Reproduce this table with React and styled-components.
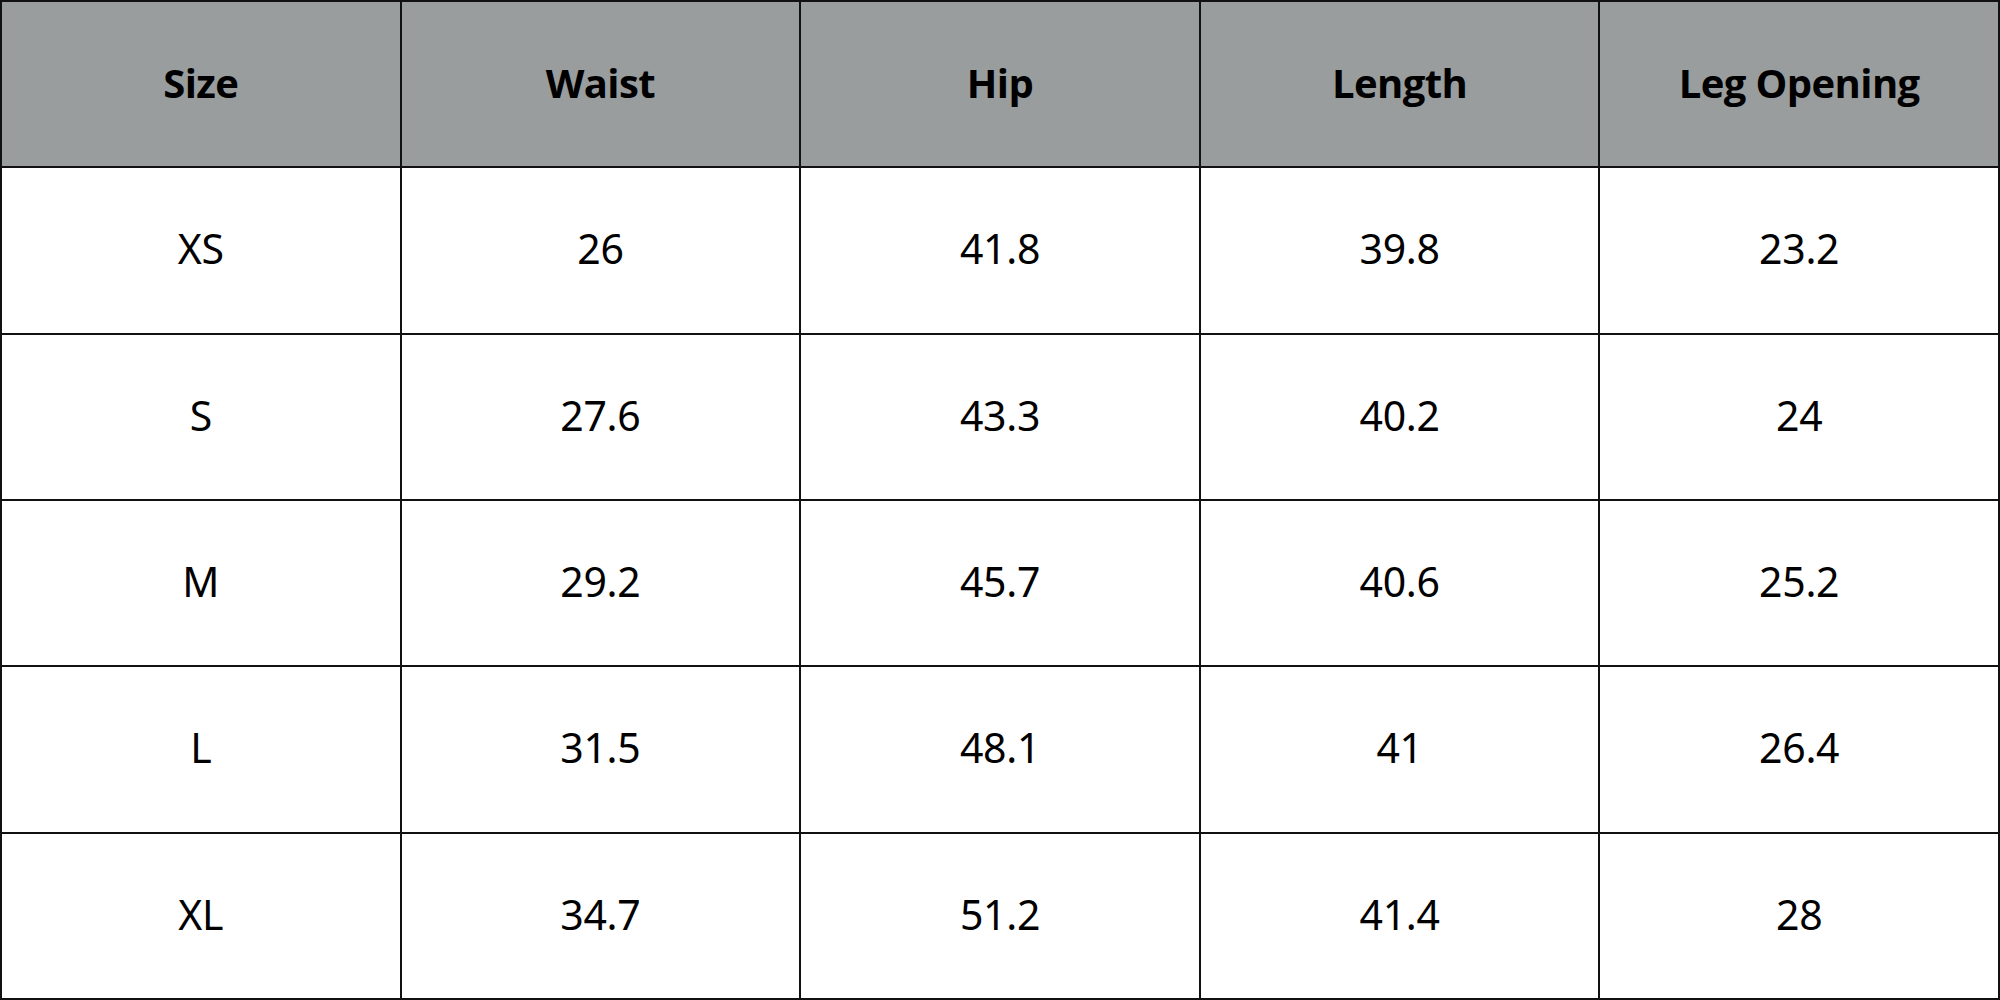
import styled, { createGlobalStyle } from 'styled-components';

const GlobalStyle = createGlobalStyle`
  * {
    box-sizing: border-box;
  }
  body {
    margin: 0;
    background: #fff;
  }
`;

const Chart = styled.div`
  width: 2000px;
  height: 1000px;
  display: grid;
  grid-template-columns: repeat(5, 1fr);
  grid-template-rows: repeat(6, 1fr);
  border-top: 2px solid #111;
  border-left: 2px solid #111;
`;

const Cell = styled.div`
  display: flex;
  align-items: center;
  justify-content: center;
  padding-bottom: 4px;
  border-right: 2px solid #111;
  border-bottom: 2px solid #111;
  background: ${(props) => (props.head ? '#999d9e' : '#fff')};
  color: #000;
  font-family: ${(props) => (props.head ? '"Open Sans"' : '"Noto Sans"')}, sans-serif;
  font-weight: ${(props) => (props.head ? 700 : 400)};
  font-size: ${(props) => (props.head ? '40px' : '41px')};
  letter-spacing: ${(props) => (props.head ? '-0.6px' : '-0.3px')};
`;

const headers = ['Size', 'Waist', 'Hip', 'Length', 'Leg Opening'];

const rows = [
  ['XS', '26', '41.8', '39.8', '23.2'],
  ['S', '27.6', '43.3', '40.2', '24'],
  ['M', '29.2', '45.7', '40.6', '25.2'],
  ['L', '31.5', '48.1', '41', '26.4'],
  ['XL', '34.7', '51.2', '41.4', '28'],
];

const App = () => {
  return (
    <>
      <GlobalStyle />
      <Chart>
        {headers.map((h) => (
          <Cell head key={h}>
            {h}
          </Cell>
        ))}
        {rows.map((row) =>
          row.map((value, i) => <Cell key={row[0] + i}>{value}</Cell>)
        )}
      </Chart>
    </>
  );
};

export default App;
